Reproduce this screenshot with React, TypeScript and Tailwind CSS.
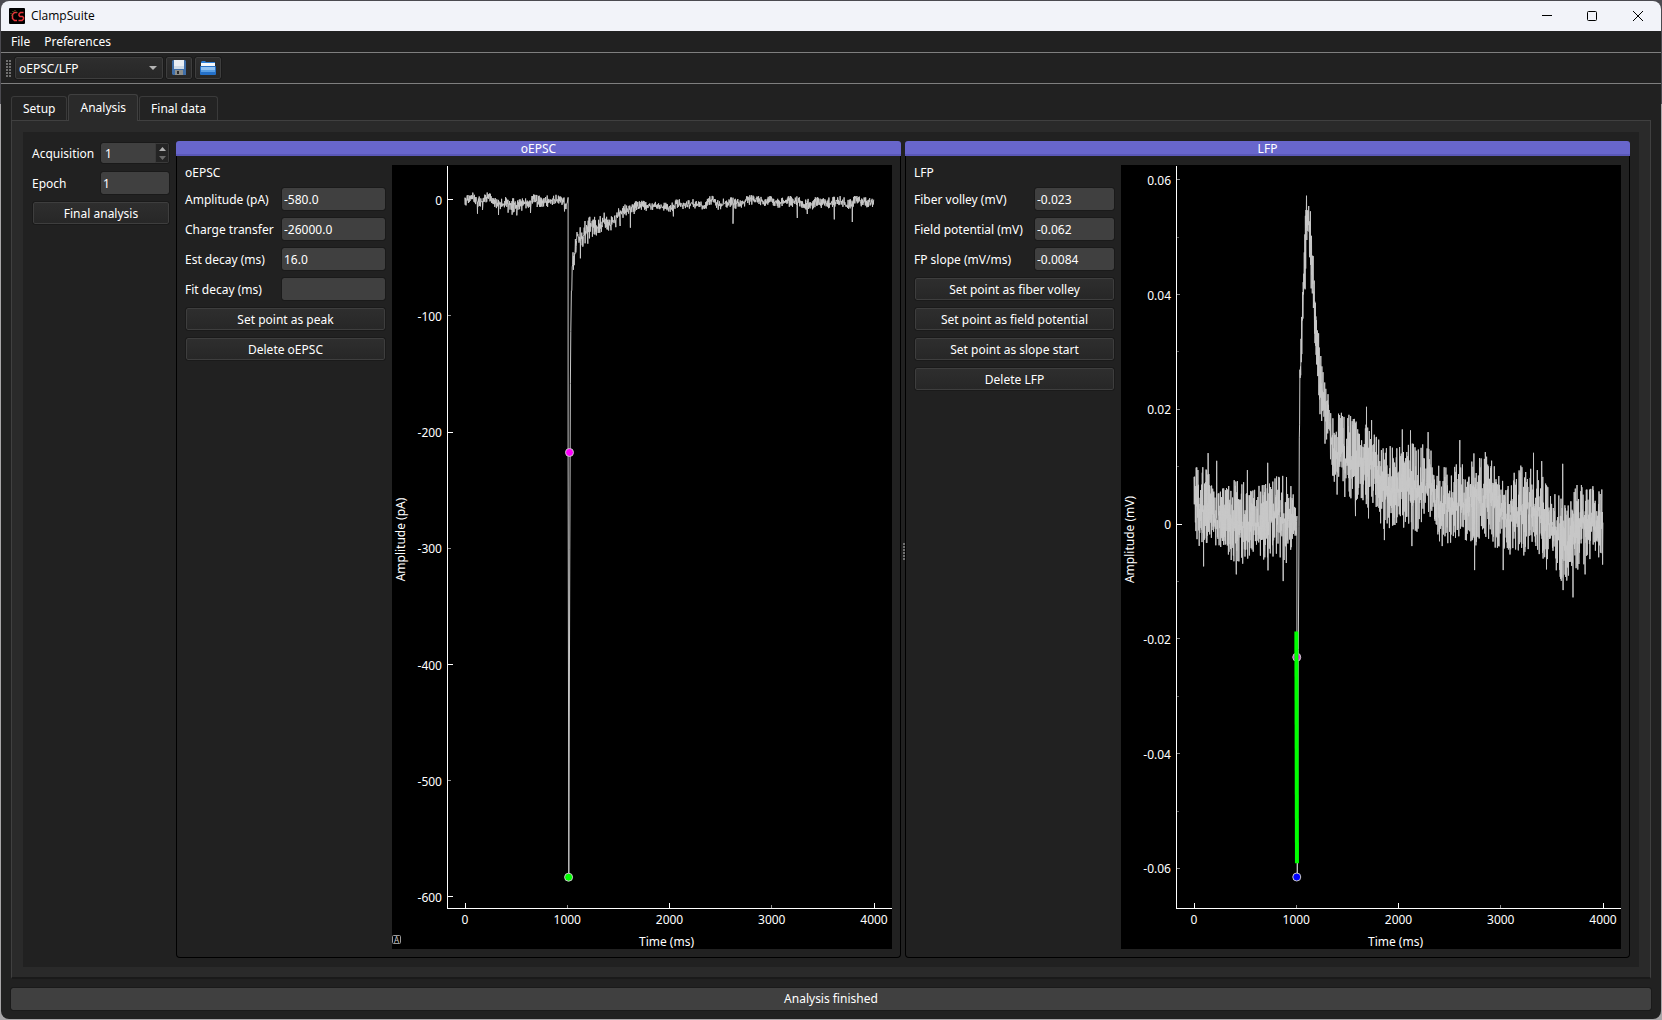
import { useEffect, useMemo, useRef, useState } from "react";
import type { ReactNode } from "react";

type Point = [number, number];
type Knot = [number, number, number];

/* Small deterministic generator so that the recordings look the same on every load. */
function makeRandom(seed: number) {
  let s = seed;
  return () => {
    s = (s * 1664525 + 1013904223) % 4294967296;
    return s / 4294967296;
  };
}

const EPSC_BASE: Knot[] = [
  [253, 138, 170], [265, 132, 162], [278, 125, 152], [290, 138, 170], [305, 140, 174], [315, 126, 158], [328, 128, 156],
  [338, 142, 172], [360, 144, 178], [380, 137, 176], [400, 144, 188], [420, 139, 180], [440, 140, 176], [460, 130, 168],
  [480, 138, 174], [500, 136, 172], [520, 136, 166], [543, 129, 168], [552, 144, 186], [561, 140, 172],
];
const EPSC_TAIL: Knot[] = [
  [573, 420, 480], [575, 340, 400], [578, 290, 380], [582, 285, 380], [586, 255, 330], [591, 232, 290], [597, 230, 295],
  [605, 228, 298], [612, 215, 284], [620, 198, 285], [630, 195, 258], [640, 198, 262], [650, 200, 258], [660, 198, 250],
  [670, 186, 244], [680, 192, 248], [692, 198, 250], [703, 188, 240], [712, 166, 218], [725, 166, 204], [745, 158, 200],
  [765, 154, 190], [785, 148, 178], [800, 158, 184], [825, 153, 183], [850, 158, 182], [875, 156, 188], [892, 144, 176],
  [915, 152, 178], [940, 146, 176], [960, 150, 182], [975, 150, 182], [990, 131, 167], [1003, 140, 174], [1018, 154, 182],
  [1035, 138, 175], [1060, 142, 178], [1085, 144, 176], [1100, 134, 165], [1130, 132, 164], [1150, 142, 174],
  [1170, 132, 162], [1192, 144, 176], [1210, 136, 168], [1240, 138, 172], [1258, 138, 178], [1285, 146, 184],
  [1310, 140, 172], [1340, 142, 176], [1365, 138, 173], [1383, 134, 173], [1400, 150, 182], [1415, 144, 182],
  [1428, 130, 160], [1442, 142, 176], [1462, 140, 172], [1481, 144, 172],
];
const EPSC_SPIKES: Point[] = [
  [291, 191], [306, 180], [354, 195], [383, 188], [395, 194], [409, 196], [424, 182], [450, 189], [552, 184], [600, 325],
  [607, 290], [614, 280], [622, 281], [636, 260], [648, 256], [719, 228], [750, 233], [879, 199], [1058, 221],
  [1251, 204], [1281, 192], [1362, 208], [1416, 216],
];
const LFP_BASE: Knot[] = [
  [242, 960, 1130], [250, 945, 1190], [270, 920, 1220], [284, 970, 1190], [300, 1020, 1190], [330, 1000, 1210],
  [360, 990, 1250], [400, 1000, 1240], [430, 1010, 1235], [455, 980, 1235], [490, 970, 1230], [512, 980, 1255],
  [533, 1030, 1200], [540, 1090, 1200],
];
const LFP_TAIL: Knot[] = [
  [548, 800, 1000], [550, 620, 720], [553, 560, 690], [556, 410, 600], [560, 330, 470], [564, 190, 460], [567, 130, 345],
  [570, 124, 280], [574, 140, 290], [578, 150, 390], [582, 220, 440], [587, 280, 480], [591, 390, 570], [596, 470, 670],
  [601, 530, 740], [606, 565, 820], [611, 575, 810], [616, 660, 850], [622, 680, 920], [628, 675, 890], [634, 680, 920],
  [641, 790, 960], [650, 810, 1055], [665, 785, 1035], [690, 795, 1060], [720, 805, 1060], [745, 815, 1080],
  [765, 845, 1070], [780, 870, 1120], [800, 890, 1150], [830, 880, 1130], [850, 890, 1140], [870, 870, 1150],
  [890, 880, 1150], [920, 870, 1120], [940, 930, 1170], [960, 950, 1180], [990, 950, 1200], [1020, 930, 1170],
  [1060, 920, 1190], [1100, 915, 1170], [1120, 955, 1200], [1150, 990, 1230], [1180, 950, 1210], [1210, 940, 1230],
  [1240, 950, 1220], [1270, 1010, 1240], [1290, 1020, 1250], [1310, 1050, 1310], [1340, 1030, 1310], [1360, 990, 1260],
  [1380, 995, 1240], [1400, 1000, 1230], [1430, 1020, 1255],
];
const LFP_SPIKES: Point[] = [
  [283, 911], [308, 934], [397, 962], [456, 940], [270, 1251], [365, 1275], [457, 1263], [501, 1295], [670, 790],
  [697, 800], [743, 772], [758, 812], [711, 1100], [749, 1107], [795, 1172], [847, 840], [871, 843], [875, 1190],
  [922, 848], [963, 1190], [1014, 872], [1055, 912], [1057, 1262], [1088, 908], [1140, 1262], [1228, 910],
  [1252, 935], [1266, 1260], [1313, 943], [1314, 1322], [1343, 1344], [1378, 1275],
];

function band(knots: Knot[], step: number, jitter: number, random: () => number): Point[] {
  const out: Point[] = [];
  let k = 0;
  let high = true;
  const last = knots[knots.length - 1][0];
  for (let x = knots[0][0]; x <= last; x += step) {
    while (k < knots.length - 2 && x > knots[k + 1][0]) k++;
    const [x0, a0, b0] = knots[k];
    const [x1, a1, b1] = knots[k + 1];
    const f = (x - x0) / (x1 - x0);
    const top = a0 + (a1 - a0) * f;
    const bottom = b0 + (b1 - b0) * f;
    const inset = (bottom - top) * jitter * random();
    out.push([x, high ? top + inset : bottom - inset]);
    high = !high;
  }
  return out;
}

function addSpikes(points: Point[], spikes: Point[]): Point[] {
  const out = [...points];
  for (const spike of spikes) {
    const at = out.findIndex((p) => p[0] >= spike[0]);
    if (at > 0) out.splice(at, 0, spike);
  }
  return out;
}

function epscTrace(): Point[] {
  const random = makeRandom(11);
  const points = addSpikes(
    [
      ...band(EPSC_BASE, 1.2, 0.6, random),
      [563, 142], [563, 900], [565, 2180], [568, 1200], [570, 700], [571, 545],
      ...band(EPSC_TAIL, 1.2, 0.6, random),
    ],
    EPSC_SPIKES,
  );
  return points.map(([x, y]) => [(x - 253.5) / 0.3069, -(y - 149) / 3.488]);
}

function lfpTrace(): Point[] {
  const random = makeRandom(5);
  const points = addSpikes(
    [
      ...band(LFP_BASE, 0.8, 0.55, random),
      [541, 1100], [541, 1700], [542, 2182], [545, 1500], [547, 1130],
      ...band(LFP_TAIL, 0.8, 0.55, random),
    ],
    LFP_SPIKES,
  );
  return points.map(([x, y]) => [(x - 242) / 0.297, -(y - 1124) / 17220]);
}

type Tick = { value: number; label?: string; level: 0 | 1 | 2 };
type Marker = { at: Point; fill: string };

const TIME_TICKS: Tick[] = [
  { value: 0, label: "0", level: 0 },
  { value: 1000, label: "1000", level: 1 },
  { value: 2000, label: "2000", level: 0 },
  { value: 3000, label: "3000", level: 1 },
  { value: 4000, label: "4000", level: 0 },
];
const EPSC_TICKS: Tick[] = [0, -100, -200, -300, -400, -500, -600].map((value) => ({
  value,
  label: String(value),
  level: value % 200 === 0 ? 0 : 1,
}));
const LFP_TICKS: Tick[] = [
  { value: 0.06, label: "0.06", level: 1 },
  { value: 0.05, level: 2 },
  { value: 0.04, label: "0.04", level: 1 },
  { value: 0.03, level: 2 },
  { value: 0.02, label: "0.02", level: 1 },
  { value: 0.01, level: 2 },
  { value: 0, label: "0", level: 0 },
  { value: -0.01, level: 2 },
  { value: -0.02, label: "-0.02", level: 1 },
  { value: -0.03, level: 2 },
  { value: -0.04, label: "-0.04", level: 1 },
  { value: -0.05, level: 2 },
  { value: -0.06, label: "-0.06", level: 1 },
];
const TICK_LENGTH = [6, 4, 3];
const TICK_COLOR = ["#ffffff", "#8c8c8c", "#5a5a5a"];

function Plot(props: {
  yLabel: string;
  yRange: [number, number];
  yTicks: Tick[];
  trace: () => Point[];
  markers: Marker[];
  slope?: [Point, Point];
  autoButton?: boolean;
}) {
  const { yLabel, yRange, yTicks, trace, markers, slope, autoButton } = props;
  const box = useRef<HTMLDivElement>(null);
  const [size, setSize] = useState({ w: 500, h: 784 });
  const points = useMemo(trace, [trace]);

  useEffect(() => {
    const el = box.current;
    if (!el) return;
    const observer = new ResizeObserver(() => setSize({ w: el.clientWidth, h: el.clientHeight }));
    observer.observe(el);
    return () => observer.disconnect();
  }, []);

  const left = 55;
  const bottom = size.h - 41;
  const sx = (t: number) => left + 18 + ((size.w - left - 36) * t) / 4000;
  const sy = (v: number) => 1 + ((yRange[1] - v) / (yRange[1] - yRange[0])) * (bottom - 1);
  const path = points.map(([t, v], i) => `${i ? "L" : "M"}${sx(t).toFixed(1)} ${sy(v).toFixed(1)}`).join("");
  const middle = (left + size.w) / 2;

  return (
    <div ref={box} className="min-h-0 min-w-0 flex-1 overflow-hidden bg-black">
      <svg width={size.w} height={size.h} className="block fill-white" role="img" aria-label={`${yLabel} over time`}>
        <path d={path} fill="none" stroke="#c8c8c8" strokeWidth="1" />
        {markers.map((m) => (
          <circle key={m.fill} cx={sx(m.at[0])} cy={sy(m.at[1])} r="4" fill={m.fill} stroke="#c8c8c8" strokeWidth="1" />
        ))}
        {slope && (
          <line
            x1={sx(slope[0][0])} y1={sy(slope[0][1])} x2={sx(slope[1][0])} y2={sy(slope[1][1])}
            stroke="#00ff00" strokeWidth="4"
          />
        )}
        <g shapeRendering="crispEdges">
          <rect x={left} y="1" width="1" height={bottom} />
          <rect x={left} y={bottom} width={size.w - left} height="1" />
          {yTicks.map((t) => (
            <rect key={t.value} x={left} y={Math.floor(sy(t.value))} width={TICK_LENGTH[t.level]} height="1" fill={TICK_COLOR[t.level]} />
          ))}
          {TIME_TICKS.map((t) => (
            <rect
              key={t.value} x={Math.floor(sx(t.value))} y={bottom - TICK_LENGTH[t.level] + 1} width="1"
              height={TICK_LENGTH[t.level]} fill={TICK_COLOR[t.level]}
            />
          ))}
          <rect x={left} y="1" width="1" height={bottom} />
          <rect x={left} y={bottom} width={size.w - left} height="1" />
        </g>
        <g fontSize="12">
          {yTicks.map((t) => (
            <text key={t.value} x={left - 5} y={sy(t.value) + 5} textAnchor="end">{t.label}</text>
          ))}
          {TIME_TICKS.map((t) => (
            <text key={t.value} x={sx(t.value)} y={bottom + 16} textAnchor="middle">{t.label}</text>
          ))}
          <text x={middle - 3} y={bottom + 38} textAnchor="middle">Time (ms)</text>
          <text transform={`translate(13 ${bottom / 2 + 3}) rotate(-90)`} textAnchor="middle">{yLabel}</text>
          {autoButton && (
            <g>
              <rect x=".5" y={size.h - 13.5} width="8" height="8" rx="1" fill="none" stroke="#9a9a9a" />
              <text x="4.5" y={size.h - 6.5} fontSize="8" textAnchor="middle" fill="#c8c8c8">A</text>
            </g>
          )}
        </g>
      </svg>
    </div>
  );
}

const BUTTON =
  "h-[22px] rounded-[2px] border border-[#3e3e3e] bg-linear-to-b from-[#2e2e2e] to-[#272727] text-center leading-[18px] outline outline-[#1a1a1a]";
const FIELD = "h-[22px] w-full min-w-0 rounded-[2px] bg-[#404040] px-0.5 pt-px outline outline-[#1a1a1a]";

function Field({ id, label, value }: { id: string; label: string; value: string }) {
  return (
    <>
      <label htmlFor={id} className="pt-px whitespace-nowrap">{label}</label>
      <input id={id} defaultValue={value} className={FIELD} />
    </>
  );
}

function Action({ children }: { children: ReactNode }) {
  return <button type="button" className={`${BUTTON} col-span-2 ml-px pt-px`}>{children}</button>;
}

function Dock({ title, children }: { title: string; children: ReactNode }) {
  return (
    <section className="flex min-w-0 flex-1 flex-col">
      <h2 className="h-[15px] rounded-t-[3px] border-b-2 border-[#5a58b8] bg-[#6866cc] text-center leading-4">{title}</h2>
      <div className="flex min-h-0 flex-1 gap-[7px] rounded-b border border-t-0 border-black px-2 pt-[9px] pb-2">{children}</div>
    </section>
  );
}

const EPSC_MARKERS: Marker[] = [
  { at: [1022, -217.500], fill: "#ff00ff" },
  { at: [1013, -583], fill: "#00ff00" },
];
const LFP_MARKERS: Marker[] = [
  { at: [1005, -0.0232], fill: "#e030e0" },
  { at: [1005, -0.0615], fill: "#0000ff" },
];

export default function App() {
  const [tab, setTab] = useState("Analysis");
  return (
    <div className="h-screen bg-linear-to-b from-[#4b4a50] from-[104px] to-[#a8a6a8] to-[104px] p-px font-['Noto_Sans',sans-serif] text-[12px] leading-4 text-white">
      <div className="flex h-full flex-col overflow-hidden rounded-lg bg-[#212121]">
        <header className="flex h-[30px] shrink-0 items-center bg-[#f2f3f9] pl-2 font-['Open_Sans',sans-serif] text-black">
          <svg width="16" height="16" viewBox="0 0 16 16" aria-hidden="true">
            <rect width="16" height="16" rx="1" fill="#000" />
            <path d="M8 4.5H5.5L3.5 6.5v4l2 2H8M14.5 4.5h-3L10 6v1.5l1 1h2.5l1 1V11L13 12.500H9.500" fill="none" stroke="#e8343a" strokeWidth="1.5" />
            <path d="M1.500 5.500h1M3.500 3.500h1M5.500 2.500h1M2.500 7.500h1M7.500 4.500h1" stroke="#6d7a2a" />
          </svg>
          <h1 className="ml-1.5 flex-1">ClampSuite</h1>
          <button type="button" aria-label="Minimize" className="grid h-full w-[45px] place-items-center">
            <svg width="10" height="10" shapeRendering="crispEdges"><path d="M0 4.500h10" stroke="#000" /></svg>
          </button>
          <button type="button" aria-label="Maximize" className="grid h-full w-[45px] place-items-center">
            <svg width="10" height="10"><rect x=".5" y=".5" width="9" height="9" rx="1" fill="none" stroke="#000" /></svg>
          </button>
          <button type="button" aria-label="Close" className="grid h-full w-[47px] place-items-center">
            <svg width="10" height="10"><path d="M0 0l10 10M10 0L0 10" stroke="#000" /></svg>
          </button>
        </header>

        <nav className="flex h-[22px] shrink-0 items-center gap-[14px] border-b border-[#7f7f7f] px-2.5">
          <button type="button">File</button>
          <button type="button">Preferences</button>
        </nav>

        <div className="flex h-[31px] shrink-0 items-center gap-[3px] border-b border-[#7f7f7f] pl-[5px]">
          <svg width="6" height="17" className="fill-[#707070]" aria-hidden="true">
            {[0, 3, 6, 9, 12, 15].map((y) => (
              <g key={y}><rect x="0" y={y} width="2" height="2" /><rect x="3" y={y} width="2" height="2" /></g>
            ))}
          </svg>
          <div className="relative">
            <select aria-label="Analysis type" className={`${BUTTON} block w-[148px] appearance-none pt-px pl-[3px] text-left!`}>
              <option>oEPSC/LFP</option>
            </select>
            <svg width="8" height="5" className="pointer-events-none absolute top-[9px] right-1.5 fill-[#b4b4b4]" aria-hidden="true"><path d="M0 0h8L4 4z" /></svg>
          </div>
          <button type="button" aria-label="Save" className={`${BUTTON} grid w-[26px] place-items-center`}>
            <svg width="14" height="16" viewBox="0 0 14 16">
              <path d="M1 0h12l1 1v14H1l-1-1V1z" fill="#3f6ea8" />
              <rect x="2" y="0" width="10" height="9" fill="#e9eef4" />
              <rect x="2" y="6" width="10" height="3" fill="#cfdbe8" />
              <rect x="3" y="10" width="8" height="5" fill="#8d8f8c" />
              <rect x="5" y="11" width="2" height="3" fill="#2b2b2b" />
            </svg>
          </button>
          <button type="button" aria-label="Open" className={`${BUTTON} grid w-[26px] place-items-center`}>
            <svg width="16" height="14" viewBox="0 0 16 14">
              <path d="M1 2V1l1-1h3l1 1h9v2H1z" fill="#2e7fd6" />
              <rect x="1" y="2" width="14" height="4" fill="#f4f8fc" />
              <rect x="0" y="5" width="16" height="9" rx="1" fill="#2470c8" />
              <rect x="1" y="6" width="14" height="3" fill="#8fc0f0" />
              <rect x="1" y="9" width="14" height="2" fill="#5a9fe4" />
            </svg>
          </button>
        </div>

        <main className="flex min-h-0 flex-1 flex-col px-2.5 pt-[10px] pb-[9px]">
          <div role="tablist" className="flex items-end gap-px">
            {["Setup", "Analysis", "Final data"].map((name) => (
              <button
                key={name} type="button" role="tab" aria-selected={tab === name} onClick={() => setTab(name)}
                className={
                  tab === name
                    ? "z-10 -mb-px h-[27px] rounded-t-[3px] border border-b-0 border-[#404040] bg-[#2a2a2a] px-[11px]"
                    : "h-6 rounded-t-[3px] border border-b-0 border-[#3a3a3a] bg-[#232323] px-[11px]"
                }
              >
                {name}
              </button>
            ))}
          </div>
          <div className="flex min-h-0 flex-1 flex-col border border-b-2 border-[#404040] border-b-[#1a1a1a] bg-[#2a2a2a] px-[11px] pt-[11px] pb-[10px]">
            <div className="flex min-h-0 flex-1 gap-[7px] bg-[#212121] py-[9px] pr-[9px] pl-2">
              <aside className="grid w-[138px] shrink-0 auto-rows-[22px] grid-cols-[69px_1fr] items-center gap-y-2 pt-px pl-px">
                <label htmlFor="acquisition" className="pt-px">Acquisition</label>
                <div className="flex h-5 rounded-[2px] outline outline-[#1a1a1a]">
                  <input id="acquisition" defaultValue="1" className="w-full min-w-0 rounded-l-[2px] bg-[#404040] px-1 pt-px outline-none" />
                  <div className="flex w-[14px] shrink-0 flex-col border border-[#3a3a3a] bg-[#242424]">
                    <button type="button" aria-label="Next acquisition" className="grid flex-1 place-items-center">
                      <svg width="7" height="4"><path d="M0 4h7L3.500 0z" fill="#b0b0b0" /></svg>
                    </button>
                    <button type="button" aria-label="Previous acquisition" className="grid flex-1 place-items-center">
                      <svg width="7" height="4"><path d="M0 0h7L3.500 4z" fill="#6a6a6a" /></svg>
                    </button>
                  </div>
                </div>
                <Field id="epoch" label="Epoch" value="1" />
                <Action>Final analysis</Action>
              </aside>

              <Dock title="oEPSC">
                <div className="grid w-[200px] shrink-0 auto-rows-[22px] grid-cols-[97px_1fr] grid-rows-[15px] content-start items-center gap-y-2">
                  <h3 className="col-span-2 pt-px">oEPSC</h3>
                  <Field id="amplitude" label="Amplitude (pA)" value="-580.0" />
                  <Field id="charge" label="Charge transfer" value="-26000.0" />
                  <Field id="est-decay" label="Est decay (ms)" value="16.0" />
                  <Field id="fit-decay" label="Fit decay (ms)" value="" />
                  <Action>Set point as peak</Action>
                  <Action>Delete oEPSC</Action>
                </div>
                <Plot yLabel="Amplitude (pA)" yRange={[-609.5, 29]} yTicks={EPSC_TICKS} trace={epscTrace} markers={EPSC_MARKERS} autoButton />
              </Dock>

              <div className="-mx-[7px] flex w-1 shrink-0 flex-col items-end justify-center gap-px pt-1" aria-hidden="true">
                {[0, 1, 2, 3, 4, 5].map((n) => <span key={n} className="size-0.5 bg-[#707070]" />)}
              </div>

              <Dock title="LFP">
                <div className="grid w-[200px] shrink-0 auto-rows-[22px] grid-cols-[121px_1fr] grid-rows-[15px] content-start items-center gap-y-2">
                  <h3 className="col-span-2 pt-px">LFP</h3>
                  <Field id="fiber-volley" label="Fiber volley (mV)" value="-0.023" />
                  <Field id="field-potential" label="Field potential (mV)" value="-0.062" />
                  <Field id="fp-slope" label="FP slope (mV/ms)" value="-0.0084" />
                  <Action>Set point as fiber volley</Action>
                  <Action>Set point as field potential</Action>
                  <Action>Set point as slope start</Action>
                  <Action>Delete LFP</Action>
                </div>
                <Plot
                  yLabel="Amplitude (mV)" yRange={[-0.0669, 0.0624]} yTicks={LFP_TICKS} trace={lfpTrace} markers={LFP_MARKERS}
                  slope={[[1001, -0.0187], [1007, -0.0591]]}
                />
              </Dock>
            </div>
          </div>
          <div role="status" className="mt-[9px] h-[22px] shrink-0 rounded-[2px] bg-[#404040] text-center leading-[22px] outline outline-[#1a1a1a]">
            Analysis finished
          </div>
        </main>
      </div>
    </div>
  );
}
